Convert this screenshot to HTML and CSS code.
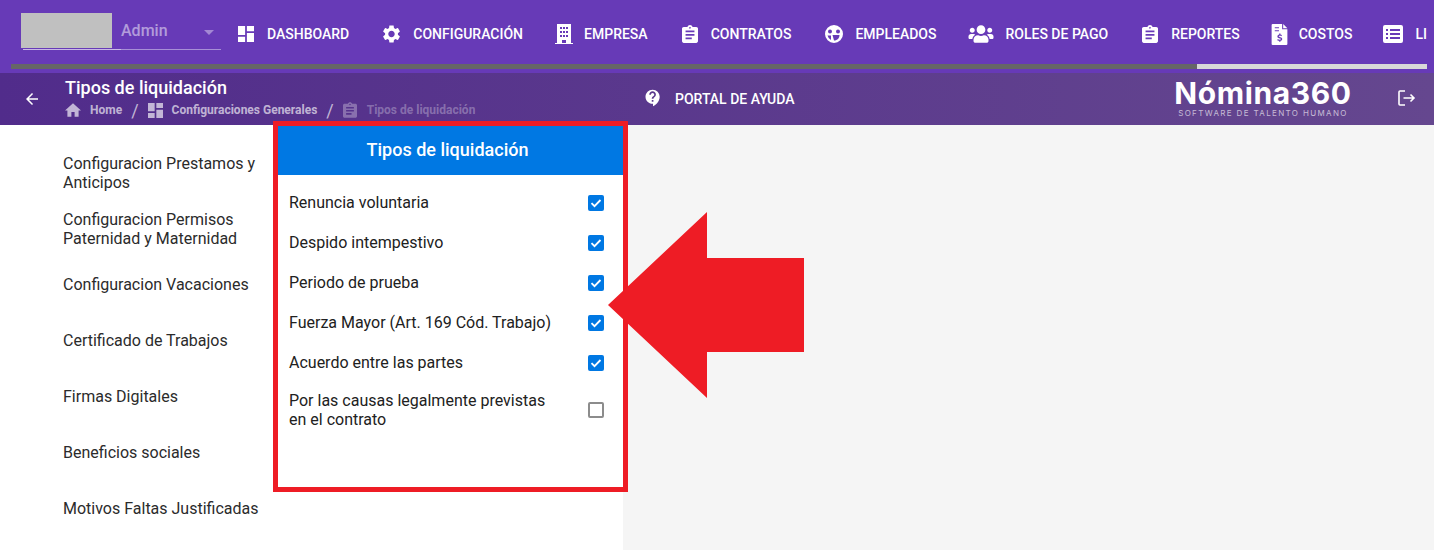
FILE: index.html
```html
<!DOCTYPE html>
<html lang="es">
<head>
    <meta charset="UTF-8">
    <meta name="viewport" content="width=device-width, initial-scale=1.0">
    <title>Tipos de liquidación</title>
    <link rel="stylesheet" href="styles.css">
</head>
<body>

    <header class="topbar">
        <div class="user-select">
            <div class="user-blur"></div>
            <span class="user-name">Admin</span>
            <span class="select-arrow"></span>
        </div>

        <nav class="menu">
            <a class="menu-item"><svg class="icon" viewBox="3 3 18 18"><path d="M3 13h8V3H3v10zm0 8h8v-6H3v6zm10 0h8V11h-8v10zm0-18v6h8V3h-8z"/></svg>DASHBOARD</a>
            <a class="menu-item"><svg class="icon icon-gear" viewBox="2.500 2 19 20"><path d="M19.14 12.94c.04-.3.06-.61.06-.94 0-.32-.02-.64-.07-.94l2.03-1.58c.18-.14.23-.41.12-.61l-1.92-3.32c-.12-.22-.37-.29-.59-.22l-2.39.96c-.5-.38-1.03-.7-1.62-.94l-.36-2.54c-.04-.24-.24-.41-.48-.41h-3.84c-.24 0-.43.17-.47.41l-.36 2.54c-.59.24-1.13.57-1.62.94l-2.39-.96c-.22-.08-.47 0-.59.22L2.74 8.87c-.12.21-.08.47.12.61l2.03 1.58c-.05.3-.09.63-.09.94s.02.64.07.94l-2.03 1.58c-.18.14-.23.41-.12.61l1.92 3.32c.12.22.37.29.59.22l2.39-.96c.5.38 1.03.7 1.62.94l.36 2.54c.05.24.24.41.48.41h3.84c.24 0 .44-.17.47-.41l.36-2.54c.59-.24 1.13-.56 1.62-.94l2.39.96c.22.08.47 0 .59-.22l1.92-3.32c.12-.22.07-.47-.12-.61l-2.01-1.58zM12 15.6c-1.98 0-3.6-1.62-3.6-3.6s1.62-3.6 3.6-3.6 3.6 1.62 3.6 3.6-1.62 3.6-3.6 3.6z"/></svg>CONFIGURACIÓN</a>
            <a class="menu-item"><svg class="icon icon-tall" viewBox="0 0 18 20"><path fill-rule="evenodd" d="M2 0h14v19h2v1H0v-1h2zM5 3v2h2V3zm3 0v2h2V3zm3 0v2h2V3zM5 7v2h2V7zm3 0v2h2V7zm3 0v2h2V7zM5 11v2h2v-2zm3 0v2h2v-2zm3 0v2h2v-2zM7 16v3h4v-3z"/></svg>EMPRESA</a>
            <a class="menu-item"><svg class="icon icon-clip" viewBox="3 1 18 20"><path d="M19 3h-4.18C14.4 1.84 13.3 1 12 1c-1.3 0-2.4.84-2.82 2H5c-1.1 0-2 .9-2 2v14c0 1.1.9 2 2 2h14c1.1 0 2-.9 2-2V5c0-1.1-.9-2-2-2zm-7 0c.55 0 1 .45 1 1s-.45 1-1 1-1-.45-1-1 .45-1 1-1zm2 14H7v-2h7v2zm3-4H7v-2h10v2zm0-4H7V7h10v2z"/></svg>CONTRATOS</a>
            <a class="menu-item"><svg class="icon icon-face" viewBox="0 0 18 18"><path fill-rule="evenodd" d="M9 0a9 9 0 1 0 0 18A9 9 0 0 0 9 0zM3 6.500a2 2 0 1 1 4 0 2 2 0 0 1-4 0zm8 0a2 2 0 1 1 4 0 2 2 0 0 1-4 0zM7.500 10h7c0 3-2 5.500-5.500 5.500zM2.500 10.500h3.500v4.500a7 7 0 0 1-3.500-4.500z"/></svg>EMPLEADOS</a>
            <a class="menu-item"><svg class="icon icon-wide" viewBox="0 0 640 512"><path d="M96 224c35.300 0 64-28.700 64-64s-28.700-64-64-64-64 28.700-64 64 28.700 64 64 64zm448 0c35.300 0 64-28.700 64-64s-28.700-64-64-64-64 28.700-64 64 28.700 64 64 64zm32 32h-64c-17.600 0-33.500 7.100-45.100 18.600 40.300 22.100 68.900 62 75.100 109.400h66c17.700 0 32-14.300 32-32v-32c0-35.300-28.700-64-64-64zm-256 0c61.900 0 112-50.100 112-112S381.900 32 320 32 208 82.100 208 144s50.100 112 112 112zm76.800 32h-8.300c-20.800 10-43.900 16-68.500 16s-47.600-6-68.500-16h-8.300C179.600 288 128 339.600 128 403.200V432c0 26.500 21.500 48 48 48h288c26.500 0 48-21.500 48-48v-28.800c0-63.600-51.600-115.200-115.200-115.200zm-223.700-13.400C161.500 263.100 145.600 256 128 256H64c-35.300 0-64 28.700-64 64v32c0 17.700 14.300 32 32 32h65.900c6.300-47.400 34.900-87.300 75.200-109.400z"/></svg>ROLES DE PAGO</a>
            <a class="menu-item"><svg class="icon icon-clip" viewBox="3 1 18 20"><path d="M19 3h-4.18C14.4 1.84 13.3 1 12 1c-1.3 0-2.4.84-2.82 2H5c-1.1 0-2 .9-2 2v14c0 1.1.9 2 2 2h14c1.1 0 2-.9 2-2V5c0-1.1-.9-2-2-2zm-7 0c.55 0 1 .45 1 1s-.45 1-1 1-1-.45-1-1 .45-1 1-1zm2 14H7v-2h7v2zm3-4H7v-2h10v2zm0-4H7V7h10v2z"/></svg>REPORTES</a>
            <a class="menu-item"><svg class="icon icon-doc" viewBox="0 0 15 20"><path fill-rule="evenodd" d="M1 0h9v5h5v14a1 1 0 0 1-1 1H1a1 1 0 0 1-1-1V1a1 1 0 0 1 1-1zm10 0l4 4h-4zM3 3v1h4V3zm0 3v1h4V6zm4.200 3v1.100c-1 .2-1.700.9-1.700 1.800 0 2 3.300 1.500 3.300 2.500 0 .8-2 .6-3-.1l-.4 1.100c.5.300 1.100.5 1.800.6V17h1.200v-1c1-.2 1.700-.9 1.700-1.800 0-2-3.300-1.500-3.300-2.500 0-.7 1.700-.6 2.600-.1l.4-1.100c-.5-.2-.9-.4-1.400-.4V9z"/></svg>COSTOS</a>
            <a class="menu-item"><svg class="icon icon-list" viewBox="0 0 20 18"><path fill-rule="evenodd" d="M2 0h16a2 2 0 0 1 2 2v14a2 2 0 0 1-2 2H2a2 2 0 0 1-2-2V2a2 2 0 0 1 2-2zm1 4v2h2V4zm4 0v2h10V4zM3 8v2h2V8zm4 0v2h10V8zM3 12v2h2v-2zm4 0v2h10v-2z"/></svg>LI</a>
        </nav>

        <div class="progress"><div class="progress-done"></div></div>
    </header>

    <div class="subbar">
        <svg class="back" viewBox="0 0 24 24"><path d="M20 11H7.830l5.590-5.590L12 4l-8 8 8 8 1.410-1.410L7.830 13H20v-2z"/></svg>
        <div class="title-block">
            <h1>Tipos de liquidación</h1>
            <div class="crumbs">
                <svg class="crumb-home" viewBox="2 3 20 17"><path d="M10 20v-6h4v6h5v-8h3L12 3 2 12h3v8z"/></svg>
                <span>Home</span>
                <i>/</i>
                <svg viewBox="3 3 18 18"><path d="M3 13h8V3H3v10zm0 8h8v-6H3v6zm10 0h8V11h-8v10zm0-18v6h8V3h-8z"/></svg>
                <span>Configuraciones Generales</span>
                <i>/</i>
                <svg class="crumb-off crumb-clip" viewBox="3 1 18 20"><path d="M19 3h-4.180C14.400 1.840 13.300 1 12 1c-1.300 0-2.400.84-2.820 2H5c-1.100 0-2 .9-2 2v14c0 1.100.9 2 2 2h14c1.100 0 2-.9 2-2V5c0-1.100-.9-2-2-2zm-7 0c.55 0 1 .45 1 1s-.45 1-1 1-1-.45-1-1 .45-1 1-1zm2 14H7v-2h7v2zm3-4H7v-2h10v2zm0-4H7V7h10v2z"/></svg>
                <span class="crumb-off">Tipos de liquidación</span>
            </div>
        </div>
        <a class="help"><svg viewBox="0 0 24 24"><path d="M11.500 2C6.810 2 3 5.810 3 10.500S6.810 19 11.500 19h.5v3c4.860-2.340 8-7 8-11.500C20 5.810 16.190 2 11.500 2zm1 14.500h-2v-2h2v2zm0-3.500h-2c0-3.250 3-3 3-5 0-1.100-.9-2-2-2s-2 .9-2 2h-2c0-2.210 1.790-4 4-4s4 1.790 4 4c0 2.500-3 2.750-3 5z"/></svg>PORTAL DE AYUDA</a>
        <div class="logo">
            <div class="logo-name">Nómina360</div>
            <div class="logo-sub">SOFTWARE DE TALENTO HUMANO</div>
        </div>
        <svg class="logout" viewBox="0 0 18 16"><path fill="none" stroke="#fff" stroke-width="1.600" d="M7 1H2a1 1 0 0 0-1 1v12a1 1 0 0 0 1 1h5M5.500 8H16M12.500 4.500L16 8l-3.500 3.500"/></svg>
    </div>

    <main class="content">
        <section class="left">
            <ul class="side-list">
                <li>Configuracion Prestamos y Anticipos</li>
                <li>Configuracion Permisos Paternidad y Maternidad</li>
                <li>Configuracion Vacaciones</li>
                <li>Certificado de Trabajos</li>
                <li>Firmas Digitales</li>
                <li>Beneficios sociales</li>
                <li>Motivos Faltas Justificadas</li>
            </ul>
            <div class="panel">
                <h2>Tipos de liquidación</h2>
                <div class="panel-rows">
                    <div class="row"><span>Renuncia voluntaria</span><b class="check on"><svg viewBox="0 0 16 16"><path d="M3.500 8.200l3 3 6-6.200"/></svg></b></div>
                    <div class="row"><span>Despido intempestivo</span><b class="check on"><svg viewBox="0 0 16 16"><path d="M3.500 8.200l3 3 6-6.200"/></svg></b></div>
                    <div class="row"><span>Periodo de prueba</span><b class="check on"><svg viewBox="0 0 16 16"><path d="M3.500 8.200l3 3 6-6.200"/></svg></b></div>
                    <div class="row"><span>Fuerza Mayor (Art. 169 Cód. Trabajo)</span><b class="check on"><svg viewBox="0 0 16 16"><path d="M3.500 8.200l3 3 6-6.200"/></svg></b></div>
                    <div class="row"><span>Acuerdo entre las partes</span><b class="check on"><svg viewBox="0 0 16 16"><path d="M3.500 8.200l3 3 6-6.200"/></svg></b></div>
                    <div class="row row-tall"><span>Por las causas legalmente previstas en el contrato</span><b class="check"></b></div>
                </div>
            </div>
            <div class="red-frame"></div>
        </section>
        <section class="right"></section>
    </main>

    <svg class="red-arrow" viewBox="0 0 198 186"><path d="M1 93L100 0v46h97v94H100v46z"/></svg>

</body>
</html>
```

FILE: styles.css
```css
* {
    box-sizing: border-box;
}

html, body {
    height: 100%;
}

body {
    font-family: Roboto, "Liberation Sans", sans-serif;
    margin: 0;
    padding: 0;
    background-color: #fff;
    overflow: hidden;
    position: relative;
}

.topbar {
    height: 73px;
    background: #673ab7;
    position: relative;
    display: flex;
    padding: 13px 7px 0 21px;
}

.user-select {
    width: 200px;
    height: 37px;
    position: relative;
    display: flex;
    align-items: center;
    padding-left: 100px;
    flex: none;
}

/* underline, brighter under the name part */
.user-select::after {
    content: "";
    position: absolute;
    left: 2px;
    right: 0;
    bottom: 0;
    height: 1px;
    background: linear-gradient(90deg, #c9b8e6 0, #c9b8e6 98px, #a78fd6 98px);
}

.user-blur {
    position: absolute;
    left: 0;
    top: 0;
    width: 91px;
    height: 35px;
    background: #c0c0c0;
}

.user-name {
    font-size: 16px;
    font-weight: 500;
    color: rgba(255, 255, 255, .5);
    margin-top: -3px;
}

.select-arrow {
    position: absolute;
    left: 183px;
    top: 17px;
    width: 0;
    height: 0;
    border-left: 5px solid transparent;
    border-right: 5px solid transparent;
    border-top: 5px solid rgba(255, 255, 255, .4);
}

.menu {
    display: flex;
    align-items: flex-start;
    height: 40px;
    overflow: hidden;
    flex: 1;
    margin-left: 17px;
    padding-top: 9px;
}

.menu-item {
    display: flex;
    align-items: center;
    flex: none;
    height: 24px;
    color: #fff;
    font-size: 14px;
    font-weight: 500;
    white-space: nowrap;
    margin-right: 32px;
}

.menu-item:nth-child(1) { margin-right: 34px; }
.menu-item:nth-child(3) { margin-right: 34px; }
.menu-item:nth-child(4) { margin-right: 34px; }
.menu-item:nth-child(6) { margin-right: 34px; }
.menu-item:nth-child(7) { margin-right: 31px; }
.menu-item:nth-child(8) { margin-right: 31px; }
.menu-item:last-child { margin-right: 0; }

.icon {
    width: 16px;
    height: 16px;
    fill: #fff;
    margin-right: 13px;
    flex: none;
}

.icon-gear {
    width: 17px;
    height: 18px;
}

.icon-tall {
    width: 18px;
    height: 20px;
    margin-right: 11px;
}

.icon-clip {
    width: 16px;
    height: 18px;
}

.icon-face {
    width: 18px;
    height: 18px;
    margin-right: 12px;
}

.icon-wide {
    width: 26px;
    height: 20px;
    margin-right: 11px;
}

.icon-doc {
    width: 17px;
    height: 21px;
    margin-right: 11px;
}

.icon-list {
    width: 20px;
    height: 18px;
    margin-right: 12px;
}

.progress {
    position: absolute;
    left: 11px;
    right: 7px;
    top: 64px;
    height: 5px;
    background: #d8d8d8;
}

.progress-done {
    width: 1186px;
    height: 100%;
    background: #666;
}

.subbar {
    height: 52px;
    background: linear-gradient(90deg, #512c8b, #65478f);
    display: flex;
    align-items: center;
    color: #fff;
    position: relative;
}

.back {
    width: 18px;
    height: 18px;
    fill: #fff;
    margin-left: 23px;
    flex: none;
}

.title-block {
    margin-left: 24px;
    margin-bottom: 2px;
    width: 578px;
    flex: none;
}

h1 {
    font-size: 18px;
    font-weight: 500;
    line-height: 20px;
    margin: 0 0 4px;
}

.crumbs {
    display: flex;
    align-items: center;
    font-size: 12px;
    font-weight: 700;
    height: 16px;
    color: rgba(255, 255, 255, .65);
}

.crumbs svg {
    width: 15px;
    height: 15px;
    fill: rgba(255, 255, 255, .65);
    margin-right: 9px;
}

.crumbs .crumb-home {
    width: 16px;
    height: 14px;
}

.crumbs .crumb-clip {
    width: 14px;
    height: 16px;
    margin-right: 10px;
}

.crumbs i {
    font-style: normal;
    font-weight: 400;
    font-size: 18px;
    margin: 0 9px;
}

.crumbs .crumb-off {
    color: rgba(255, 255, 255, .3);
    fill: rgba(255, 255, 255, .3);
}

.help {
    display: flex;
    align-items: center;
    font-size: 14px;
    font-weight: 500;
    width: 522px;
    flex: none;
    margin-top: -1px;
}

.help svg {
    width: 20px;
    height: 20px;
    fill: #fff;
    margin-right: 12px;
    margin-top: -1px;
}

.logo {
    width: 196px;
    flex: none;
    text-align: center;
    margin-bottom: 4px;
}

.logo-name {
    font-family: Inter, Lato, sans-serif;
    font-size: 30px;
    font-weight: 700;
    line-height: 32px;
    letter-spacing: .6px;
    white-space: nowrap;
}

.logo-sub {
    font-family: Inter, Lato, sans-serif;
    font-size: 8px;
    line-height: 9px;
    letter-spacing: 1.350px;
    color: rgba(255, 255, 255, .65);
    white-space: nowrap;
}

.logout {
    width: 18px;
    height: 16px;
    margin-left: 37px;
    margin-bottom: 3px;
    flex: none;
}

.content {
    display: flex;
    height: 425px;
}

.left {
    width: 623px;
    display: flex;
    position: relative;
    flex: none;
}

.right {
    flex: 1;
    background: #f5f5f5;
}

.side-list {
    list-style: none;
    margin: 0;
    padding: 20px 0 0 63px;
    width: 278px;
    flex: none;
    font-size: 16px;
    line-height: 19px;
    color: #2b2b2b;
}

.side-list li {
    height: 56px;
    padding-bottom: 1px;
    display: flex;
    align-items: center;
    width: 200px;
    white-space: normal;
}

.side-list li:last-child {
    white-space: nowrap;
}

.panel {
    width: 345px;
    height: 362px;
    flex: none;
}

h2 {
    margin: 0;
    height: 50px;
    padding: 0 6px 2px 0;
    background: #0078e3;
    color: #fff;
    font-size: 18px;
    font-weight: 500;
    display: flex;
    align-items: center;
    justify-content: center;
}

.panel-rows {
    padding: 7px 19px 0 11px;
}

.row {
    height: 40px;
    display: flex;
    align-items: center;
    justify-content: space-between;
    font-size: 16px;
    line-height: 19px;
    color: #212121;
}

.row-tall {
    height: 56px;
}

.row-tall span {
    width: 270px;
}

.check {
    width: 16px;
    height: 16px;
    border-radius: 2px;
    border: 2px solid #8c8c8c;
    flex: none;
    display: block;
}

.check.on {
    background: #0078e3;
    border: 0;
    margin-top: 2px;
}

.check svg {
    display: block;
    width: 16px;
    height: 16px;
    fill: none;
    stroke: #fff;
    stroke-width: 1.800;
}

.red-frame {
    position: absolute;
    left: 273px;
    top: -4px;
    width: 355px;
    height: 371px;
    border: 5px solid #ee1c25;
    pointer-events: none;
}

.red-arrow {
    position: absolute;
    left: 607px;
    top: 212px;
    width: 198px;
    height: 186px;
    fill: #ee1c25;
}
```
